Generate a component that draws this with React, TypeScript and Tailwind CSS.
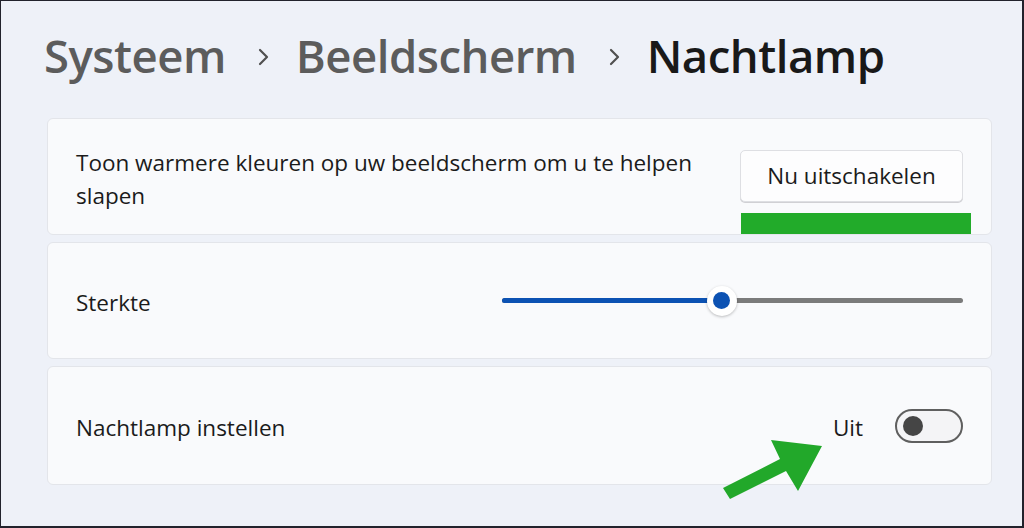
import React from "react";

const font = { fontFamily: '"Open Sans", "Noto Sans", sans-serif' };

function ChevronSep() {
  return (
    <svg width="14" height="22" viewBox="0 0 14 22" className="ml-[31px] mr-[25px] mt-[2px]">
      <path d="M3 4 L10 11 L3 18" fill="none" stroke="#505050" strokeWidth="2.2" strokeLinecap="round" strokeLinejoin="round" />
    </svg>
  );
}

export default function App() {
  return (
    <div
      className="relative w-[1024px] h-[528px] overflow-hidden bg-[#eef1f8] border-t border-l border-r-2 border-b-2 border-[#22222c] text-[#1b1b1b]"
      style={font}
    >
      <div className="flex items-center pl-[43px] pt-[14px] h-[96px] text-[45.5px] leading-none tracking-[-0.5px]">
        <span className="text-[#5c5c5c] font-semibold">Systeem</span>
        <ChevronSep />
        <span className="text-[#5c5c5c] font-semibold">Beeldscherm</span>
        <ChevronSep />
        <span className="text-[#191919] font-semibold">Nachtlamp</span>
      </div>

      <div className="ml-[46px] w-[945px] mt-[21px] flex flex-col gap-[7px]">
        <div className="relative h-[117px] rounded-[6px] bg-[#f9fafc] border border-[#e3e5ea] flex items-center pl-[28px] pr-[28px]">
          <div className="flex-1 text-[22.5px] leading-[33px] pt-[4px] pr-[30px]">
            Toon warmere kleuren op uw beeldscherm om u te helpen slapen
          </div>
          <div className="w-[223px] h-[52px] rounded-[5px] bg-[#fdfdfe] border border-[#dedfe3] shadow-[0_1px_0_#d0d0d4] flex items-center justify-center text-[22.5px] mb-[2px]">
            Nu uitschakelen
          </div>
          <div className="absolute left-[693px] bottom-0 w-[230px] h-[21px] bg-[#22ab2a]" />
        </div>

        <div className="h-[117px] rounded-[6px] bg-[#f9fafc] border border-[#e3e5ea] flex items-center pl-[28px] pr-[28px]">
          <div className="flex-1 text-[22.5px] pt-[4px]">Sterkte</div>
          <div className="relative w-[461px] h-[30px] flex items-center">
            <div className="absolute left-0 right-0 h-[5px] rounded-full bg-[#7b7b7b]" />
            <div className="absolute left-0 w-[47.7%] h-[5px] rounded-full bg-[#0c52b3]" />
            <div className="absolute left-[47.7%] -translate-x-1/2 w-[30px] h-[30px] rounded-full bg-white shadow-[0_1px_3px_rgba(0,0,0,0.25)] flex items-center justify-center">
              <div className="w-[17px] h-[17px] rounded-full bg-[#0c52b3]" />
            </div>
          </div>
        </div>

        <div className="h-[119px] rounded-[6px] bg-[#f9fafc] border border-[#e3e5ea] flex items-center pl-[28px] pr-[28px]">
          <div className="flex-1 text-[22.5px] pt-[4px]">Nachtlamp instellen</div>
          <div className="text-[22.5px] mr-[32px] pt-[4px]">Uit</div>
          <div className="w-[68px] h-[34px] rounded-full border-2 border-[#5f5f5f] bg-[#f4f4f6] flex items-center pl-[6px]">
            <div className="w-[20px] h-[20px] rounded-full bg-[#454545]" />
          </div>
        </div>
      </div>

      <svg className="absolute left-0 top-0" width="1024" height="528" viewBox="0 0 1024 528">
        <polygon
          points="722,487 729,498 785,470 797,490 821,445 770,439 779,458"
          fill="#22a82a"
        />
      </svg>
    </div>
  );
}
